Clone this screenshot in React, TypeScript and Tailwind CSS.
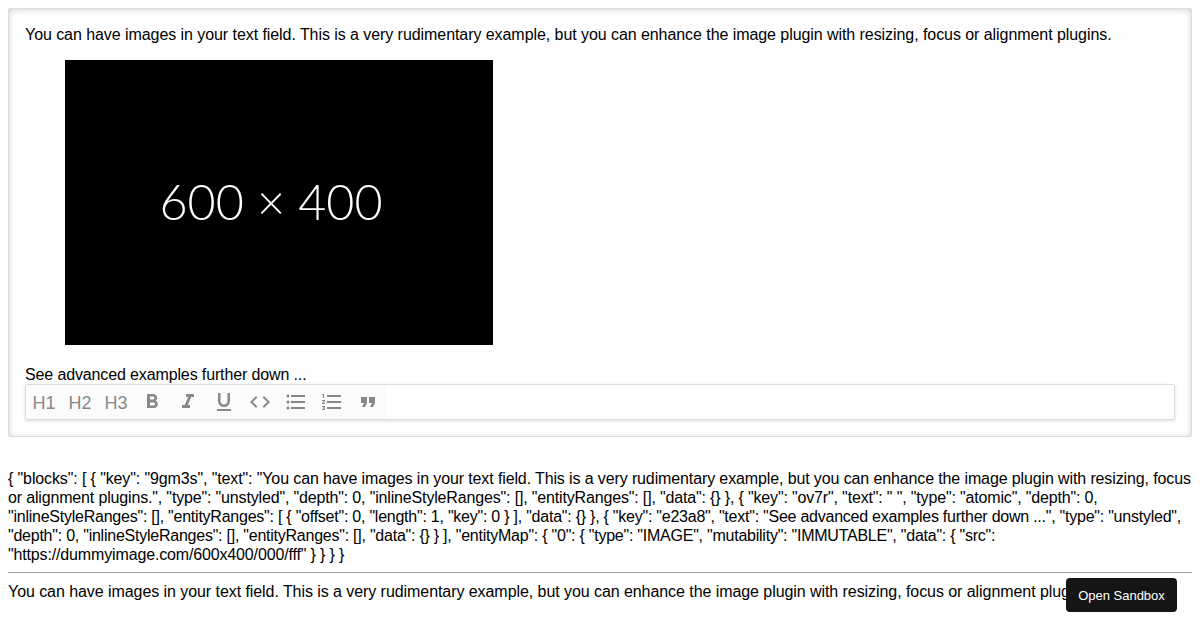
const ICONS = [
  "M15.6 10.79c.97-.67 1.65-1.77 1.65-2.79 0-2.26-1.75-4-4-4H7v14h7.04c2.09 0 3.71-1.7 3.71-3.79 0-1.52-.86-2.82-2.15-3.42zM10 6.5h3c.83 0 1.5.67 1.5 1.5s-.67 1.5-1.5 1.5h-3v-3zm3.5 9H10v-3h3.5c.83 0 1.5.67 1.5 1.5s-.67 1.5-1.5 1.5z",
  "M10 4v3h2.21l-3.42 8H6v3h8v-3h-2.21l3.42-8H18V4z",
  "M12 17c3.31 0 6-2.69 6-6V3h-2.5v8c0 1.93-1.57 3.5-3.5 3.5S8.5 12.93 8.5 11V3H6v8c0 3.31 2.69 6 6 6zm-7 2v2h14v-2H5z",
  "M9.4 16.6L4.8 12l4.6-4.6L8 6l-6 6 6 6 1.4-1.4zm5.2 0l4.6-4.6-4.6-4.6L16 6l6 6-6 6-1.4-1.4z",
  "M4 10.5c-.83 0-1.5.67-1.5 1.5s.67 1.5 1.5 1.5 1.5-.67 1.5-1.5-.67-1.5-1.5-1.5zm0-6c-.83 0-1.5.67-1.5 1.5S3.17 7.5 4 7.5 5.5 6.83 5.5 6 4.83 4.5 4 4.5zm0 12c-.83 0-1.5.68-1.5 1.5s.68 1.5 1.5 1.5 1.5-.68 1.5-1.5-.67-1.5-1.5-1.5zM7 19h14v-2H7v2zm0-6h14v-2H7v2zm0-8v2h14V5H7z",
  "M2 17h2v.5H3v1h1v.5H2v1h3v-4H2v1zm1-9h1V4H2v1h1v3zm-1 3h1.8L2 13.1v.9h3v-1H3.2L5 10.9V10H2v1zm5-6v2h14V5H7zm0 14h14v-2H7v2zm0-6h14v-2H7v2z",
  "M6 17h3l2-4V7H5v6h3zm8 0h3l2-4V7h-6v6h3z",
];

// line breaks follow the reference, each line tightened to its measured width
const JSON_LINES = [
  { text: '{ "blocks": [ { "key": "9gm3s", "text": "You can have images in your text field. This is a very rudimentary example, but you can enhance the image plugin with resizing, focus', cls: "tracking-[-0.12px]" },
  { text: 'or alignment plugins.", "type": "unstyled", "depth": 0, "inlineStyleRanges": [], "entityRanges": [], "data": {} }, { "key": "ov7r", "text": " ", "type": "atomic", "depth": 0,', cls: "tracking-[-0.16px]" },
  { text: '"inlineStyleRanges": [], "entityRanges": [ { "offset": 0, "length": 1, "key": 0 } ], "data": {} }, { "key": "e23a8", "text": "See advanced examples further down ...", "type": "unstyled",', cls: "tracking-[-0.24px]" },
  { text: '"depth": 0, "inlineStyleRanges": [], "entityRanges": [], "data": {} } ], "entityMap": { "0": { "type": "IMAGE", "mutability": "IMMUTABLE", "data": { "src":', cls: "tracking-[-0.24px]" },
  { text: '"https://dummyimage.com/600x400/000/fff" } } } }', cls: "tracking-[-0.15px]" },
];

const INTRO =
  "You can have images in your text field. This is a very rudimentary example, but you can enhance the image plugin with resizing, focus or alignment plugins.";

function Toolbar() {
  return (
    <div className="flex rounded-[2px] border border-[#ddd] bg-white shadow-[0px_1px_3px_0px_rgba(220,220,220,1)]">
      {["H1", "H2", "H3"].map((h) => (
        <div key={h} className="flex h-[34px] w-[36px] items-center justify-center bg-[#fbfbfb] pt-[3px] text-[18px] tracking-normal text-[#888]">
          {h}
        </div>
      ))}
      {ICONS.map((d) => (
        <div key={d} className="flex h-[34px] w-[36px] justify-center bg-[#fbfbfb] pt-[5px]">
          <svg width="24" height="24" viewBox="0 0 24 24" fill="#888">
            <path d={d} />
          </svg>
        </div>
      ))}
    </div>
  );
}

export default function App() {
  return (
    <div className="relative h-[630px] overflow-hidden bg-white p-2 font-['Liberation_Sans',Arial,sans-serif] text-[16px] leading-[19px] tracking-[-0.065px] text-black">
      <div className="mb-8 rounded-[2px] border border-[#ddd] bg-[#fefefe] p-4 shadow-[inset_0px_1px_8px_-3px_#ababab]">
        <p>{INTRO}</p>
        <div className="mx-10 my-4 pb-1">
          <div className="flex h-[285px] w-[428px] items-center justify-center bg-black pr-[16px] pb-[2px] font-['Lato',sans-serif] text-[48.5px] font-light tracking-normal text-white">
            600 × 400
          </div>
        </div>
        <p className="tracking-[-0.13px]">See advanced examples further down ...</p>
        <Toolbar />
      </div>
      <div>
        {JSON_LINES.map((line) => (
          <p key={line.text} className={`whitespace-nowrap ${line.cls}`}>
            {line.text}
          </p>
        ))}
      </div>
      <hr className="mt-2 mb-2 border-t border-[#a0a0a0]" />
      <p className="whitespace-nowrap pt-px">{INTRO}</p>
      <div className="absolute top-[578px] left-[1066px] flex h-[34px] w-[111px] items-center justify-center rounded-[4px] bg-[#151515] text-[13px] tracking-[-0.02px] text-white">
        Open Sandbox
      </div>
    </div>
  );
}
